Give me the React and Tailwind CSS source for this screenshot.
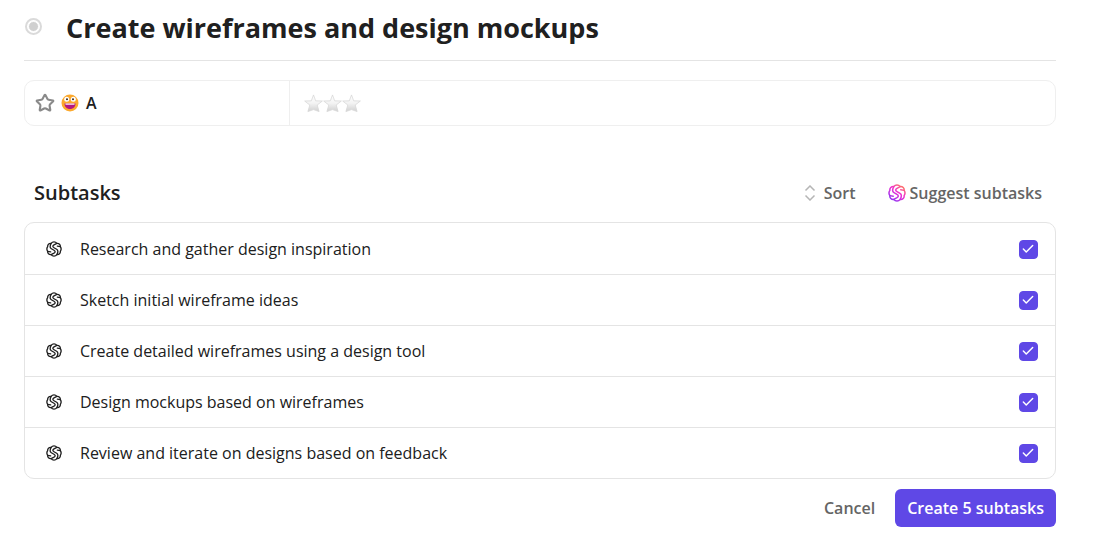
import { useState } from "react";
import { Star, Check } from "lucide-react";

const SUBTASKS = [
  "Research and gather design inspiration",
  "Sketch initial wireframe ideas",
  "Create detailed wireframes using a design tool",
  "Design mockups based on wireframes",
  "Review and iterate on designs based on feedback",
];

/* AI swirl mark, shared by the rows and the suggest button */
function SwirlIcon({ className, gradient = false }) {
  return (
    <svg
      viewBox="0 0 24 24"
      fill="none"
      stroke={gradient ? "url(#swirl)" : "currentColor"}
      strokeWidth="2"
      strokeLinecap="round"
      strokeLinejoin="round"
      className={className}
      aria-hidden="true"
    >
      {gradient && (
        <defs>
          <linearGradient id="swirl" x1="20" y1="2" x2="5" y2="22" gradientUnits="userSpaceOnUse">
            <stop offset="0" stopColor="#ff7a59" />
            <stop offset="0.45" stopColor="#f02fd2" />
            <stop offset="1" stopColor="#8a35f5" />
          </linearGradient>
        </defs>
      )}
      <path d="M12 1.200c1.800 0 3.200.8 4.300 2.300 3.300-.3 5.600 2 5.200 5 1.500 2.200 1.500 4.800 0 7 .4 3-1.900 5.300-5.200 5-1.100 1.500-2.500 2.300-4.300 2.300s-3.200-.8-4.300-2.300c-3.300.3-5.600-2-5.200-5-1.500-2.200-1.500-4.800 0-7-.4-3 1.900-5.300 5.200-5C8.800 2 10.200 1.200 12 1.200z" />
      <path d="M16.300 3.500L12 5.800c-2.300 1.300-2.300 3 0 4.300l4 2.300c2.300 1.300 2.300 4.200.3 8.100" />
      <path d="M7.700 20.500l4.300-2.300c2.300-1.300 2.300-3 0-4.300l-4-2.300C5.700 10.300 5.700 7.400 7.700 3.500" />
      <path d="M21.500 8.500L17 7.800M2.500 15.500l4.500.7" />
    </svg>
  );
}

function GrinFace() {
  return (
    <svg viewBox="0 0 18 18" className="size-[18px] shrink-0" aria-hidden="true">
      <circle cx="9" cy="9" r="8.500" fill="#fca92d" />
      <circle cx="5.700" cy="5.300" r="2.500" fill="#fff" />
      <circle cx="12.300" cy="5.300" r="2.500" fill="#fff" />
      <circle cx="6" cy="5.300" r="1" fill="#3b2a20" />
      <circle cx="12" cy="5.300" r="1" fill="#3b2a20" />
      <path d="M3.500 9.500h11c0 3.300-2.300 5.500-5.500 5.500s-5.500-2.200-5.500-5.500z" fill="#b5177f" />
      <path d="M4.500 9.500h9v1.200h-9z" fill="#fff" />
    </svg>
  );
}

function RatingStar() {
  return (
    <svg viewBox="0 0 20 20" className="size-[19px]" aria-hidden="true">
      <defs>
        <linearGradient id="silver" x1="0" y1="0" x2="0" y2="1">
          <stop offset="0" stopColor="#ffffff" />
          <stop offset="0.5" stopColor="#f3f3f3" />
          <stop offset="1" stopColor="#d0d0d0" />
        </linearGradient>
      </defs>
      <path
        d="M10 1l2.300 6.200 7 .2-5.400 4.200 2 6.900L10 16.400l-5.900 2.100 2-6.900L.7 7.400l7-.2z"
        fill="url(#silver)"
        stroke="#d6d6d6"
        strokeWidth="0.800"
      />
    </svg>
  );
}

export default function App() {
  const [checked, setChecked] = useState(SUBTASKS.map(() => true));
  const count = checked.filter(Boolean).length;

  const toggle = (i) => setChecked((prev) => prev.map((v, n) => (n === i ? !v : v)));

  return (
    <main className="bg-white pl-6 pr-[39px] pb-5 font-['Open_Sans','Noto_Sans',sans-serif] text-[#202020]">
      {/* Title */}
      <header className="flex h-[61px] items-start border-b border-[#e4e4e4] pt-2">
        <button
          type="button"
          aria-label="Status"
          className="ml-px mt-[10px] flex size-[17px] items-center justify-center rounded-full border-2 border-[#dadada]"
        >
          <span className="size-[11px] rounded-full border border-white bg-[#d0d0d0]" />
        </button>
        <h1 className="ml-6 text-[27px] leading-10 font-bold">Create wireframes and design mockups</h1>
      </header>

      {/* Custom field */}
      <section className="mt-[19px] flex h-[46px] rounded-[10px] border border-[#efefef]">
        <div className="flex w-[265px] items-center gap-1.5 border-r border-[#efefef] pl-[10px]">
          <Star className="size-5 text-[#8a8a8a]" strokeWidth={2.5} />
          <GrinFace />
          <span className="ml-px text-base font-semibold">A</span>
        </div>
        <div className="flex flex-1 items-center pl-[14px]">
          <RatingStar />
          <RatingStar />
          <RatingStar />
        </div>
      </section>

      {/* Subtasks toolbar */}
      <div className="mt-[49px] flex h-9 items-center justify-between pl-[10px] pr-[14px]">
        <h2 className="text-xl font-semibold">Subtasks</h2>
        <div className="flex items-center gap-8 text-base font-semibold text-[#656565]">
          <button type="button" className="flex items-center gap-2">
            <svg viewBox="0 0 12 16" fill="none" stroke="#b5b5b5" strokeWidth="1.500" className="h-4 w-3" aria-hidden="true">
              <path d="M1.500 5.500L6 1l4.500 4.500M1.500 10.500L6 15l4.500-4.500" />
            </svg>
            Sort
          </button>
          <button type="button" className="flex items-center gap-1">
            <SwirlIcon gradient className="size-[18px]" />
            Suggest subtasks
          </button>
        </div>
      </div>

      {/* Suggested rows */}
      <ul className="mt-[11px] divide-y divide-[#e4e4e4] rounded-[10px] border border-[#e4e4e4] pt-px">
        {SUBTASKS.map((name, i) => (
          <li key={name}>
            <label className="flex h-[50px] items-center pl-[21px] pr-[17px]">
              <SwirlIcon className="size-4" />
              <span className="ml-[18px] flex-1 text-base">{name}</span>
              <span className="grid size-5 place-items-center">
                <input
                  type="checkbox"
                  checked={checked[i]}
                  onChange={() => toggle(i)}
                  className="peer col-start-1 row-start-1 size-[19px] appearance-none rounded-[4px] border border-[#cfcfcf] checked:border-[#5f48e6] checked:bg-[#5f48e6]"
                />
                <Check className="pointer-events-none col-start-1 row-start-1 hidden size-[14px] text-white peer-checked:block" strokeWidth={2.5} />
              </span>
            </label>
          </li>
        ))}
      </ul>

      {/* Actions */}
      <footer className="mt-[10px] flex items-center justify-end gap-5 text-base font-semibold">
        <button type="button" className="text-[#656565]">Cancel</button>
        <button type="button" className="h-[38px] rounded-md bg-[#5f48e6] px-3 text-white">
          Create {count} subtasks
        </button>
      </footer>
    </main>
  );
}
